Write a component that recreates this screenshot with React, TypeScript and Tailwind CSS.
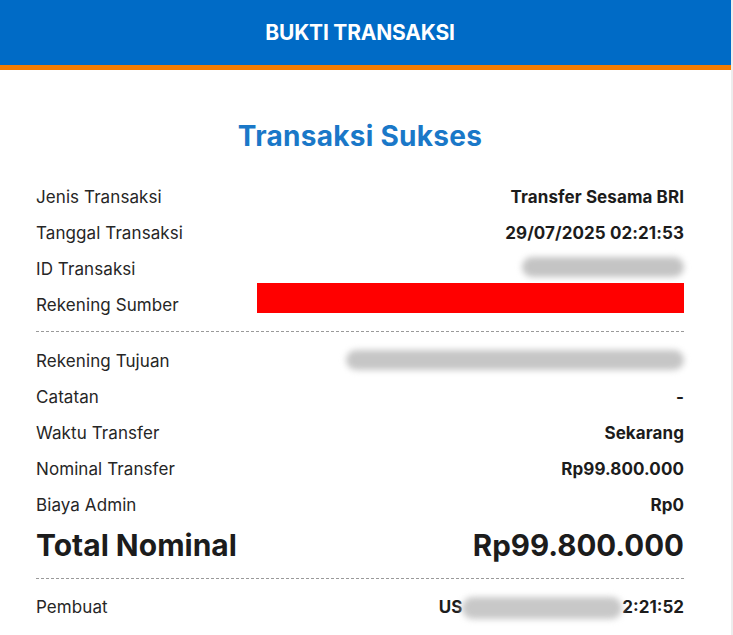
const topRows = [
  { label: "Jenis Transaksi", value: "Transfer Sesama BRI" },
  { label: "Tanggal Transaksi", value: "29/07/2025 02:21:53" },
];

const midRows = [
  { label: "Catatan", value: "-" },
  { label: "Waktu Transfer", value: "Sekarang" },
  { label: "Nominal Transfer", value: "Rp99.800.000" },
  { label: "Biaya Admin", value: "Rp0" },
];

function Row({ label, children }: { label: string; children: React.ReactNode }) {
  return (
    <div className="flex h-9 items-center justify-between pt-1">
      <span className="text-[17px] tracking-[0.005em] text-[#262626]">{label}</span>
      {children}
    </div>
  );
}

export default function App() {
  return (
    <div className="flex min-h-screen bg-white font-['Inter',sans-serif]">
      <div className="w-[731px]">
        {/* Header */}
        <div className="flex h-[70px] items-center border-b-[5px] border-[#f57c00] bg-[#006bc6]">
          <div className="w-[720px] text-center text-[21px] font-bold tracking-[-0.01em] text-white">BUKTI TRANSAKSI</div>
        </div>

        <div className="w-[720px] px-9 pt-[50px]">
          <h1 className="text-center text-[28px] font-bold leading-8 tracking-[0.01em] text-[#1a78c8]">Transaksi Sukses</h1>

          <div className="mt-[26px]">
            {topRows.map((r) => (
              <Row key={r.label} label={r.label}>
                <span className="text-[17px] font-bold tracking-[0.005em] text-[#1c1c1c]">{r.value}</span>
              </Row>
            ))}
            <Row label="ID Transaksi">
              <div className="mb-[6px] h-[20px] w-[162px] rounded-full bg-[#c4c4c4] blur-[3px]" />
            </Row>
            <Row label="Rekening Sumber">
              <div className="mb-[17px] h-[30px] w-[427px] bg-[#ff0000]" />
            </Row>
          </div>

          <div className="mt-[9px] border-t border-dashed border-[#9a9a9a]" />

          <div className="mt-[10px]">
            <Row label="Rekening Tujuan">
              <div className="mb-1 h-[20px] w-[338px] rounded-full bg-[#c6c6c6] blur-[3px]" />
            </Row>
            {midRows.map((r) => (
              <Row key={r.label} label={r.label}>
                <span className="text-[17px] font-bold tracking-[0.005em] text-[#1c1c1c]">{r.value}</span>
              </Row>
            ))}
            <div className="flex h-[46px] items-center justify-between text-[30px] font-bold text-[#1c1c1c]">
              <span>Total Nominal</span>
              <span className="text-[29.5px]">Rp99.800.000</span>
            </div>
          </div>

          <div className="mt-[10px] border-t border-dashed border-[#9a9a9a]" />

          <div className="mt-[9px]">
            <Row label="Pembuat">
              <div className="flex items-center">
                <span className="text-[17px] font-bold text-[#1c1c1c]">US</span>
                <div className="h-[22px] w-[160px] rounded-full bg-[#c8c8c8] blur-[3px]" />
                <span className="text-[17px] font-bold text-[#1c1c1c]">2:21:52</span>
              </div>
            </Row>
          </div>
        </div>
      </div>
      <div className="w-[2px] bg-[#ededed]" />
    </div>
  );
}
